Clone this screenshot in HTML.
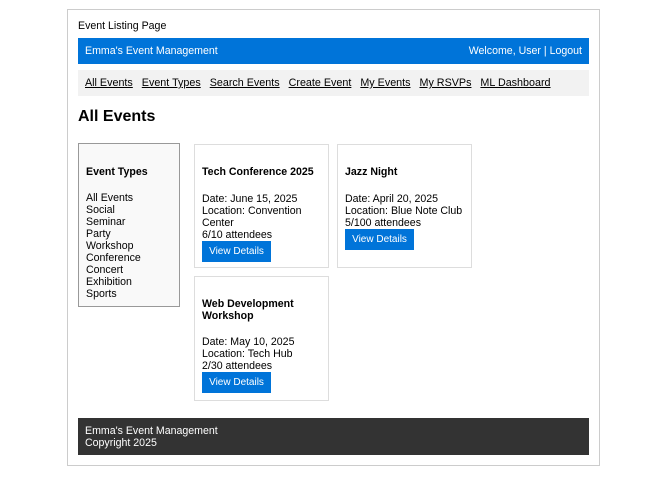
<!DOCTYPE html>
<html><head><style>
*{margin:0;padding:0;box-sizing:border-box}
body{width:665px;height:478px;background:#fff;font-family:"Liberation Sans",Arial,sans-serif;font-size:10.6px;color:#000;position:relative;overflow:hidden}
.a{position:absolute}
.card{position:absolute;border:1px solid #ddd;background:#fff;padding:0 7px;line-height:12px}
.card b{display:block;margin-top:21px;margin-bottom:15px}
.btn{display:block;width:69px;height:21px;background:#0074d9;color:#fff;font-size:10px;line-height:21px;text-align:center}
u{text-decoration:underline}
</style></head><body>
<div class="a" style="left:67px;top:9px;width:533px;height:457px;border:1px solid #ccc"></div>
<div class="a" style="left:78px;top:19px;line-height:14px">Event Listing Page</div>
<div class="a" style="left:78px;top:38px;width:511px;height:26px;background:#0074d9;color:#fff;line-height:26px;padding:0 7px">Emma's Event Management<span style="float:right">Welcome, User | Logout</span></div>
<div class="a" style="left:78px;top:70px;width:511px;height:26px;background:#f2f2f2;line-height:27px;padding-left:7px;font-size:10.75px">
<u>All Events</u>&nbsp;&nbsp; <u>Event Types</u>&nbsp;&nbsp; <u>Search Events</u>&nbsp;&nbsp; <u>Create Event</u>&nbsp;&nbsp; <u>My Events</u>&nbsp;&nbsp; <u>My RSVPs</u>&nbsp;&nbsp; <u>ML Dashboard</u></div>
<div class="a" style="left:78px;top:107px;font-size:16px;font-weight:bold;line-height:20px">All Events</div>
<div class="a" style="left:78px;top:143px;width:102px;height:164px;border:1px solid #999;background:#f9f9f9;padding:0 7px;line-height:12px">
<b style="display:block;margin-top:22px;margin-bottom:14px">Event Types</b>
All Events<br>Social<br>Seminar<br>Party<br>Workshop<br>Conference<br>Concert<br>Exhibition<br>Sports</div>
<div class="card" style="left:194px;top:144px;width:135px;height:124px"><b>Tech Conference 2025</b>Date: June 15, 2025<br>Location: Convention Center<br>6/10 attendees<span class="btn">View Details</span></div>
<div class="card" style="left:337px;top:144px;width:135px;height:124px"><b>Jazz Night</b>Date: April 20, 2025<br>Location: Blue Note Club<br>5/100 attendees<span class="btn">View Details</span></div>
<div class="card" style="left:194px;top:276px;width:135px;height:125px"><b style="margin-bottom:14px">Web Development Workshop</b>Date: May 10, 2025<br>Location: Tech Hub<br>2/30 attendees<span class="btn">View Details</span></div>
<div class="a" style="left:78px;top:418px;width:511px;height:37px;background:#333;color:#fff;padding:7px 7px;line-height:12px">Emma's Event Management<br>Copyright 2025</div>
</body></html>
